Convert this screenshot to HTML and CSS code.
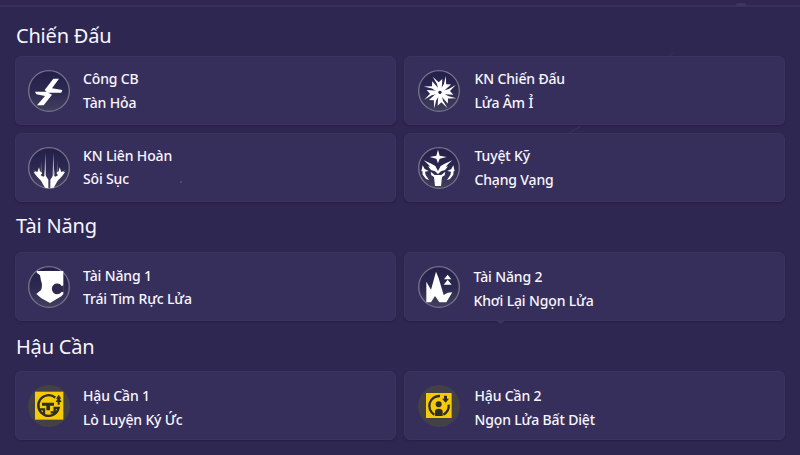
FILE: index.html
```
<!DOCTYPE html>
<html lang="vi">
<head>
<meta charset="utf-8">
<title>Kỹ năng</title>
<link rel="stylesheet" href="styles.css">
</head>
<body>
<svg class="defs" aria-hidden="true">
  <defs>
    <linearGradient id="disc" x1="0" y1="0" x2="0" y2="1">
      <stop offset="0" stop-color="#241f49"/><stop offset=".5" stop-color="#2c2951"/><stop offset="1" stop-color="#42405f"/>
    </linearGradient>
    <g id="ring"><circle cx="88" cy="91" r="61" fill="url(#disc)" stroke="#777388" stroke-width="4"/></g>
  </defs>
</svg>
<main class="panel">
  <section class="group">
    <h2 class="title">Chiến Đấu</h2>
    <div class="grid">
      <article class="card">
        <svg class="icon" viewBox="25 28 126 126"><use href="#ring"/><path fill="#fff" d="M101 54h17L97 83l31 5-3 8H84l-9-8zM46 93h34l17 9-25 32H52l24-28-26-5z"/></svg>
        <div class="text"><p>Công CB</p><p>Tàn Hỏa</p></div>
      </article>
      <article class="card">
        <svg class="icon" viewBox="25 28 126 126"><use href="#ring"/><g fill="#fff"><path id="blade" d="M87 91L82 70 69 48 87 65 98 55 96 89z"/><use href="#blade" transform="rotate(45 91 95)"/><use href="#blade" transform="rotate(90 91 95)"/><use href="#blade" transform="rotate(135 91 95)"/><use href="#blade" transform="rotate(180 91 95)"/><use href="#blade" transform="rotate(225 91 95)"/><use href="#blade" transform="rotate(270 91 95)"/><use href="#blade" transform="rotate(315 91 95)"/></g><circle cx="91" cy="95" r="4" fill="#28244d"/></svg>
        <div class="text"><p>KN Chiến Đấu</p><p>Lửa Âm Ỉ</p></div>
      </article>
      <article class="card text-high">
        <svg class="icon" viewBox="25 28 126 126"><use href="#ring"/><g id="spear" fill="#fff"><path d="M40 98l13 5 5-14 3 12 7 5-5 7 8 4 6-5 9 14v26l-10-2-12-21-13-13-9-12 6-1z"/><path fill-opacity=".7" d="M77 45l2 62v12l-6-7 2-17z"/><path fill-opacity=".3" d="M64 69l3 34-4 4z"/></g><use href="#spear" transform="matrix(-1 0 0 1 178 0)"/></svg>
        <div class="text"><p>KN Liên Hoàn</p><p>Sôi Sục</p></div>
      </article>
      <article class="card">
        <svg class="icon" viewBox="25 28 126 126"><use href="#ring"/><g fill="#fff"><path d="M85 36l5 18 21 4-21 5-5 14-5-14-20-5 20-4z"/><g id="wing"><path d="M42 68l23 10 12 7 8 15v9l-9-8-12-4-9-11 7 1-10-10zM63 102l12 10h10v33h-9l-3-27-8-5zM39 83l6 11 12 6-11 2 2 10 10 15-9-3-10-13-1-11-3 1z"/></g><use href="#wing" transform="matrix(-1 0 0 1 170 0)"/></g></svg>
        <div class="text"><p>Tuyệt Kỹ</p><p>Chạng Vạng</p></div>
      </article>
    </div>
  </section>
  <section class="group">
    <h2 class="title title-talent">Tài Năng</h2>
    <div class="grid">
      <article class="card">
        <svg class="icon" viewBox="25 28 126 126"><use href="#ring"/><path fill="#fff" d="M51 43h80v69l-6 7-34 20-26-14-15-13 14-12q6-14 0-28l-3-16-10-8z"/><path fill="#2d294f" d="M132 86l-6 2a16 16 0 1 0 0 17l6 2z"/></svg>
        <div class="text text-low"><p>Tài Năng 1</p><p>Trái Tim Rực Lửa</p></div>
      </article>
      <article class="card">
        <svg class="icon" viewBox="25 28 126 126"><use href="#ring"/><path fill="#fff" d="M50 75l14 24 15-54 8 20 15 50 12-7 14-1-18 30H89l-13-19-12 19H50zM114 54l11 14h-22zM114 69l12 15h-24z"/></svg>
        <div class="text text-shift"><p>Tài Năng 2</p><p>Khơi Lại Ngọn Lửa</p></div>
      </article>
    </div>
  </section>
  <section class="group">
    <h2 class="title title-base">Hậu Cần</h2>
    <div class="grid">
      <article class="card">
        <svg class="icon" viewBox="25 28 126 126"><circle cx="88" cy="91" r="63" fill="#434046"/><path fill="#f5ca08" d="M46 48h85v84H46z"/><path fill="none" stroke="#302d25" stroke-width="7" d="M107 66A31 31 0 1 0 117 97h-12v13h-12M60 101h13v18"/><path fill="#302d25" d="M67 81h36v9H91v14H80V90H67zM117 57l8 12h-5l6 10h-6v8h-6v-8h-6l6-10h-5z"/></svg>
        <div class="text text-lower"><p>Hậu Cần 1</p><p>Lò Luyện Ký Ức</p></div>
      </article>
      <article class="card">
        <svg class="icon" viewBox="25 28 126 126"><circle cx="88" cy="91" r="63" fill="#434046"/><path fill="#f5ca08" d="M49 52h77v75H49z"/><path fill="none" stroke="#302d25" stroke-width="7" d="M91 61a30 30 0 0 0-17 56M117 87q2 20-16 30"/><circle cx="87" cy="86" r="9" fill="#302d25"/><path fill="#302d25" d="M76 121v-14q0-8 11-8t12 8v14zM103 60h9v9h6l-10 12-11-12h6z"/></svg>
        <div class="text text-lower"><p>Hậu Cần 2</p><p>Ngọn Lửa Bất Diệt</p></div>
      </article>
    </div>
  </section>
</main>
<svg class="specks" viewBox="0 0 800 455" aria-hidden="true">
  <ellipse cx="741" cy="4.500" rx="5" ry="1.500" fill="#40385f"/>
  <path d="M496 321h9l-4.500 3z" fill="#3b335f"/>
  <path d="M569 133l12-7M669 56l4-3" stroke="#3b335f"/>
  <circle cx="181" cy="182" r="1" fill="#5d5679"/>
</svg>
</body>
</html>
```
FILE: styles.css
```
* {
  box-sizing: border-box;
}

body {
  display: flow-root;
  height: 455px;
  margin: 0;
  overflow: hidden;
  background: #2e2751;
  color: #f8f6ff;
  font-family: "Noto Sans", sans-serif;
}

.defs {
  position: absolute;
  width: 0;
  height: 0;
}

.specks {
  position: absolute;
  top: 0;
  left: 0;
  width: 800px;
  height: 455px;
  pointer-events: none;
}

.panel {
  height: 450px;
  margin-top: 5px;
  padding: 9px 15px 0;
  border-top: 2px solid #393159;
  overflow: hidden;
}

.title {
  height: 40px;
  margin: 0 0 0 1px;
  font-size: 20px;
  font-weight: 400;
  letter-spacing: -0.2px;
  line-height: 40px;
}

.title-talent {
  height: 50px;
  line-height: 47px;
}

.title-base {
  height: 50px;
  line-height: 52px;
}

.grid {
  display: grid;
  grid-template-columns: 381px 381px;
  gap: 8px;
}

.card {
  display: flex;
  align-items: center;
  gap: 13px;
  height: 69px;
  padding-left: 12px;
  border: 1px solid #3c345f;
  border-radius: 6px;
  background: #372f5b;
  box-shadow: 0 1px 2px #281f49;
}

.card:nth-child(even) {
  padding-left: 12.5px;
  gap: 15px;
}

.icon {
  flex: none;
  width: 42px;
  height: 42px;
}

.text {
  font-size: 14px;
  font-weight: 500;
  letter-spacing: -0.15px;
  line-height: 23.5px;
}

.text p {
  margin: 0;
}

.text-high .text {
  padding-bottom: 1px;
}

.text-low {
  padding-top: 1px;
}

.text-shift {
  padding-top: 4px;
  margin-left: -1px;
}

.text-lower {
  padding-top: 4px;
}
```
